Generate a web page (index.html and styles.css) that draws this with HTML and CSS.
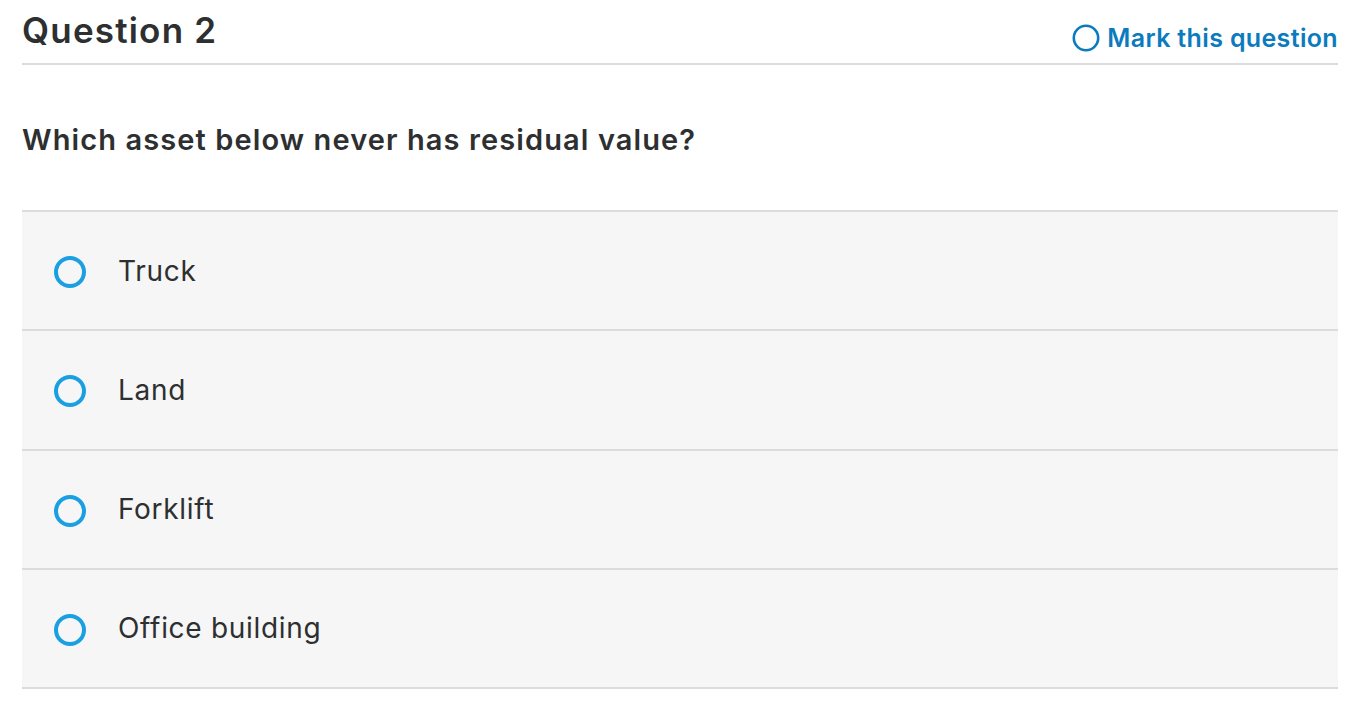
FILE: index.html
```html
<!DOCTYPE html>
<html>
<head>
<meta charset="utf-8">
<link rel="stylesheet" href="styles.css">
</head>
<body>
<div class="page">
  <div class="header">
    <h1 class="title">Question 2</h1>
    <a class="mark" href="#">
      <svg class="mark-icon" width="28" height="28" viewBox="0 0 28 28"><circle cx="14" cy="14" r="12.2" fill="none" stroke="#0b7bbd" stroke-width="2.6"/></svg>
      <span>Mark this question</span>
    </a>
  </div>
  <p class="prompt">Which asset below never has residual value?</p>
  <div class="options">
    <div class="option"><span class="radio"></span><span class="label">Truck</span></div>
    <div class="option"><span class="radio"></span><span class="label">Land</span></div>
    <div class="option"><span class="radio"></span><span class="label">Forklift</span></div>
    <div class="option"><span class="radio"></span><span class="label">Office building</span></div>
  </div>
</div>
</body>
</html>
```
FILE: styles.css
```css
html, body {
  margin: 0;
  padding: 0;
  background: #ffffff;
}
body {
  font-family: "Inter", "Liberation Sans", sans-serif;
  color: #2d2f31;
}
.page {
  padding: 0 10px 0 22px;
}
.header {
  display: flex;
  justify-content: space-between;
  align-items: flex-end;
  height: 63px;
  border-bottom: 2px solid #dcdce0;
}
.title {
  margin: 0;
  font-size: 35px;
  font-weight: 600;
  letter-spacing: 1.2px;
  line-height: 36px;
  padding-bottom: 15px;
}
.mark {
  display: flex;
  align-items: center;
  gap: 7px;
  color: #0b7bbd;
  text-decoration: none;
  font-size: 25px;
  font-weight: 600;
  letter-spacing: 0.35px;
  padding-bottom: 10px;
}
.mark-icon {
  display: block;
}
.prompt {
  margin: 0;
  padding-top: 57px;
  height: 88px;
  font-size: 29px;
  font-weight: 600;
  letter-spacing: 1.1px;
  line-height: 36px;
}
.options {
  border-top: 2px solid #dcdce0;
}
.option {
  display: flex;
  align-items: center;
  height: 117.25px;
  background: #f6f6f6;
  border-bottom: 2px solid #dcdce0;
  padding-left: 32px;
}
.radio {
  width: 24px;
  height: 24px;
  border: 4px solid #1a9fe3;
  border-radius: 50%;
  margin: 3px 32px 0 0;
}
.label {
  font-size: 28px;
  font-weight: 400;
  letter-spacing: 0.7px;
  color: #2d2f31;
}
```
